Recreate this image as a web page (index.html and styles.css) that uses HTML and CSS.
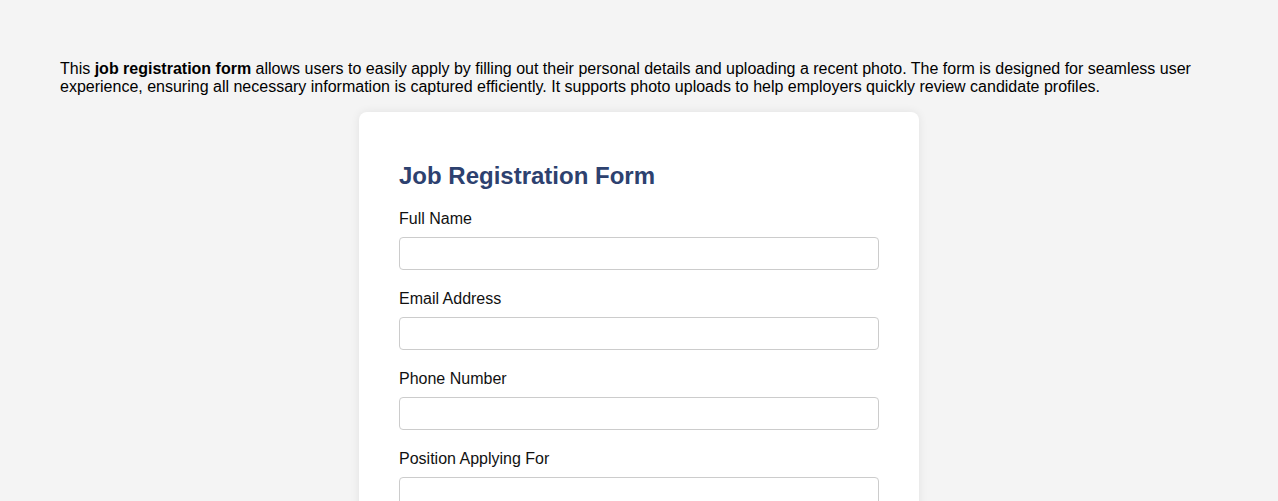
FILE: index.html
```html
<!DOCTYPE html>
<html lang="en">
<head>
<meta charset="utf-8">
<title>Job Registration Form</title>
<link rel="stylesheet" href="styles.css">
</head>
<body>
<p class="intro">This <strong>job registration form</strong> allows users to easily apply by filling out their personal details and uploading a recent photo. The form is designed for seamless user experience, ensuring all necessary information is captured efficiently. It supports photo uploads to help employers quickly review candidate profiles.</p>
<div class="card">
  <h2 class="title">Job Registration Form</h2>
  <form>
    <div class="group">
      <label for="name">Full Name</label>
      <input id="name" type="text">
    </div>
    <div class="group">
      <label for="email">Email Address</label>
      <input id="email" type="email">
    </div>
    <div class="group">
      <label for="phone">Phone Number</label>
      <input id="phone" type="tel">
    </div>
    <div class="group">
      <label for="position">Position Applying For</label>
      <input id="position" type="text">
    </div>
    <div class="group">
      <label for="photo">Upload Photo</label>
      <input id="photo" type="text">
    </div>
  </form>
</div>
</body>
</html>
```
FILE: styles.css
```css
html, body {
  margin: 0;
}
body {
  background: #f4f4f4;
  font-family: "Liberation Sans", Arial, sans-serif;
  font-size: 16px;
  color: #000;
  padding: 44px 60px 40px;
}
.intro {
  margin: 16px 0 16px;
  line-height: 18px;
}
.card {
  width: 560px;
  box-sizing: border-box;
  margin: 0 auto;
  background: #fff;
  border-radius: 8px;
  box-shadow: 0 0 10px rgba(0, 0, 0, 0.08);
  padding: 40px;
}
.title {
  margin: 10px 0 18px;
  font-size: 24px;
  line-height: 28px;
  font-weight: bold;
  color: #2d416f;
}
form {
  margin: 0;
}
.group {
  margin-bottom: 18px;
}
.group label {
  display: block;
  line-height: 18px;
  padding-top: 2px;
  margin-bottom: 9px;
  color: #111;
}
.group input {
  display: block;
  width: 100%;
  box-sizing: border-box;
  height: 33px;
  border: 1px solid #ccc;
  border-radius: 4px;
  padding: 8px;
  font: inherit;
  background: #fff;
}
```
